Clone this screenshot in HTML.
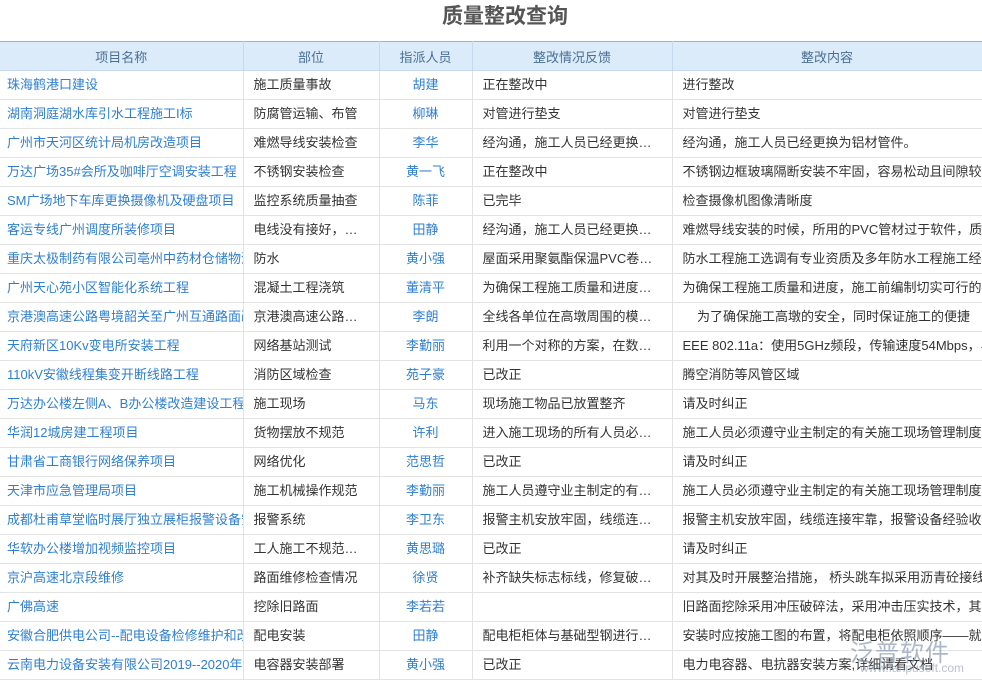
<!DOCTYPE html>
<html><head><meta charset="utf-8"><style>
*{margin:0;padding:0;box-sizing:border-box}
body{width:982px;height:679px;overflow:hidden;background:#fff;font-family:"Liberation Sans","Noto Sans CJK SC",sans-serif;font-size:13px;color:#333;position:relative}
.t{position:absolute;top:3px;left:0;width:1010px;text-align:center;font-size:21px;font-weight:bold;color:#555;line-height:28px}
table{position:absolute;top:41px;left:0;border-collapse:collapse;table-layout:fixed;width:1000px}
th{background:#dcebfa;color:#4a6f94;font-weight:normal;height:29px;border-top:1px solid #8fb8e0;border-right:1px solid #c5d9ee;border-bottom:1px solid #c5d9ee;text-align:center}
td{height:29px;border-bottom:1px solid #e3e3e3;border-right:1px solid #e3e3e3;white-space:nowrap;overflow:hidden;padding:0 10px;line-height:28px}
td.a{color:#2f7fd0;padding-left:7px;text-overflow:clip}
td.c{color:#2f7fd0;text-align:center}
td.e{text-overflow:ellipsis}
.wm{position:absolute;left:850px;top:633px;font-size:24px;color:#8a9bb5;opacity:.7;letter-spacing:1px}
.wm2{position:absolute;left:860px;top:661px;font-size:12px;color:#9aa8bd;opacity:.7}
</style></head><body>
<div class="t">质量整改查询</div>
<table>
<colgroup><col style="width:243px"><col style="width:136px"><col style="width:93px"><col style="width:200px"><col style="width:328px"></colgroup>
<tr><th>项目名称</th><th>部位</th><th>指派人员</th><th>整改情况反馈</th><th style="padding-right:18px">整改内容</th></tr>
<tr><td class="a">珠海鹤港口建设</td><td class="e">施工质量事故</td><td class="c">胡建</td><td class="e">正在整改中</td><td>进行整改</td></tr>
<tr><td class="a">湖南洞庭湖水库引水工程施工I标</td><td class="e">防腐管运输、布管</td><td class="c">柳琳</td><td class="e">对管进行垫支</td><td>对管进行垫支</td></tr>
<tr><td class="a">广州市天河区统计局机房改造项目</td><td class="e">难燃导线安装检查</td><td class="c">李华</td><td class="e">经沟通，施工人员已经更换为铝材管件。</td><td>经沟通，施工人员已经更换为铝材管件。</td></tr>
<tr><td class="a">万达广场35#会所及咖啡厅空调安装工程</td><td class="e">不锈钢安装检查</td><td class="c">黄一飞</td><td class="e">正在整改中</td><td>不锈钢边框玻璃隔断安装不牢固，容易松动且间隙较大</td></tr>
<tr><td class="a">SM广场地下车库更换摄像机及硬盘项目</td><td class="e">监控系统质量抽查</td><td class="c">陈菲</td><td class="e">已完毕</td><td>检查摄像机图像清晰度</td></tr>
<tr><td class="a">客运专线广州调度所装修项目</td><td class="e">电线没有接好，存在安全隐患</td><td class="c">田静</td><td class="e">经沟通，施工人员已经更换为铝材管件。</td><td>难燃导线安装的时候，所用的PVC管材过于软件，质量不好</td></tr>
<tr><td class="a">重庆太极制药有限公司亳州中药材仓储物流</td><td class="e">防水</td><td class="c">黄小强</td><td class="e">屋面采用聚氨酯保温PVC卷材防水</td><td>防水工程施工选调有专业资质及多年防水工程施工经验</td></tr>
<tr><td class="a">广州天心苑小区智能化系统工程</td><td class="e">混凝土工程浇筑</td><td class="c">董清平</td><td class="e">为确保工程施工质量和进度，施工前编制</td><td>为确保工程施工质量和进度，施工前编制切实可行的方案</td></tr>
<tr><td class="a">京港澳高速公路粤境韶关至广州互通路面改造</td><td class="e">京港澳高速公路粤境韶关</td><td class="c">李朗</td><td class="e">全线各单位在高墩周围的模板支架安装</td><td>&nbsp;&nbsp;&nbsp;&nbsp;为了确保施工高墩的安全，同时保证施工的便捷</td></tr>
<tr><td class="a">天府新区10Kv变电所安装工程</td><td class="e">网络基站测试</td><td class="c">李勤丽</td><td class="e">利用一个对称的方案，在数据传输中</td><td>EEE 802.11a：使用5GHz频段，传输速度54Mbps，与</td></tr>
<tr><td class="a">110kV安徽线程集变开断线路工程</td><td class="e">消防区域检查</td><td class="c">苑子豪</td><td class="e">已改正</td><td>腾空消防等风管区域</td></tr>
<tr><td class="a">万达办公楼左侧A、B办公楼改造建设工程</td><td class="e">施工现场</td><td class="c">马东</td><td class="e">现场施工物品已放置整齐</td><td>请及时纠正</td></tr>
<tr><td class="a">华润12城房建工程项目</td><td class="e">货物摆放不规范</td><td class="c">许利</td><td class="e">进入施工现场的所有人员必须遵守</td><td>施工人员必须遵守业主制定的有关施工现场管理制度</td></tr>
<tr><td class="a">甘肃省工商银行网络保养项目</td><td class="e">网络优化</td><td class="c">范思哲</td><td class="e">已改正</td><td>请及时纠正</td></tr>
<tr><td class="a">天津市应急管理局项目</td><td class="e">施工机械操作规范</td><td class="c">李勤丽</td><td class="e">施工人员遵守业主制定的有关施工现场</td><td>施工人员必须遵守业主制定的有关施工现场管理制度</td></tr>
<tr><td class="a">成都杜甫草堂临时展厅独立展柜报警设备安装</td><td class="e">报警系统</td><td class="c">李卫东</td><td class="e">报警主机安放牢固，线缆连接牢靠</td><td>报警主机安放牢固，线缆连接牢靠，报警设备经验收合格</td></tr>
<tr><td class="a">华软办公楼增加视频监控项目</td><td class="e">工人施工不规范施工</td><td class="c">黄思璐</td><td class="e">已改正</td><td>请及时纠正</td></tr>
<tr><td class="a">京沪高速北京段维修</td><td class="e">路面维修检查情况</td><td class="c">徐贤</td><td class="e">补齐缺失标志标线，修复破损护栏</td><td>对其及时开展整治措施， 桥头跳车拟采用沥青砼接线</td></tr>
<tr><td class="a">广佛高速</td><td class="e">挖除旧路面</td><td class="c">李若若</td><td class="e"></td><td>旧路面挖除采用冲压破碎法，采用冲击压实技术，其</td></tr>
<tr><td class="a">安徽合肥供电公司--配电设备检修维护和改造</td><td class="e">配电安装</td><td class="c">田静</td><td class="e">配电柜柜体与基础型钢进行连接固定</td><td>安装时应按施工图的布置，将配电柜依照顺序——就位</td></tr>
<tr><td class="a">云南电力设备安装有限公司2019--2020年</td><td class="e">电容器安装部署</td><td class="c">黄小强</td><td class="e">已改正</td><td>电力电容器、电抗器安装方案,详细请看文档</td></tr>
</table>
<div class="wm">泛普软件</div>
<div class="wm2">www.fanpusoft.com</div>
</body></html>
